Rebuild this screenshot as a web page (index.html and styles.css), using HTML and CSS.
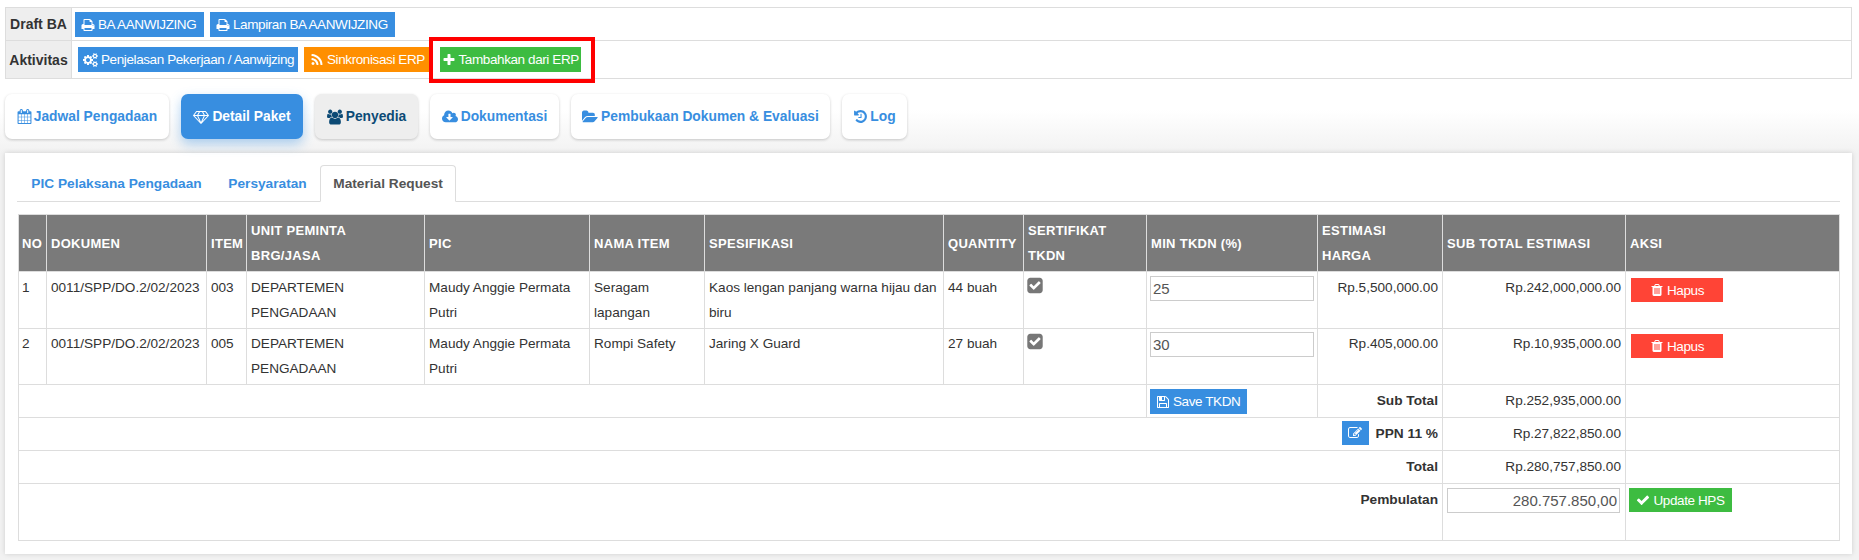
FILE: index.html
```html
<!DOCTYPE html>
<html lang="id">
<head>
<meta charset="utf-8">
<title>Material Request</title>
<link rel="stylesheet" href="styles.css">
</head>
<body>
<svg class="sprite" xmlns="http://www.w3.org/2000/svg">
<symbol id="i-print" viewBox="0 0 1792 1792"><path d="M448 1536h896v-256h-896v256zm0-640h896v-384h-160q-40 0-68-28t-28-68v-160h-640v640zm1152 64q0-26-19-45t-45-19-45 19-19 45 19 45 45 19 45-19 19-45zm128 0v416q0 13-9.5 22.5t-22.5 9.5h-224v160q0 40-28 68t-68 28h-960q-40 0-68-28t-28-68v-160h-224q-13 0-22.5-9.5t-9.5-22.5v-416q0-79 56.5-135.5t135.5-56.5h64v-544q0-40 28-68t68-28h672q40 0 88 20t76 48l152 152q28 28 48 76t20 88v256h64q79 0 135.5 56.5t56.5 135.5z"/></symbol>
<symbol id="i-cogs" viewBox="0 0 1920 1792"><path d="M896 896q0-106-75-181t-181-75-181 75-75 181 75 181 181 75 181-75 75-181zm768 512q0-52-38-90t-90-38-90 38-38 90q0 53 37.5 90.5t90.5 37.5 90.5-37.5 37.5-90.5zm0-1024q0-52-38-90t-90-38-90 38-38 90q0 53 37.5 90.5t90.5 37.5 90.5-37.5 37.5-90.5zm-384 421v185q0 10-7 19.5t-16 10.5l-155 24q-11 35-32 76 34 48 90 115 7 11 7 20 0 12-7 19-23 30-82.5 89.5t-78.5 59.5q-11 0-21-7l-115-90q-37 19-77 31-11 108-23 155-7 24-30 24h-186q-11 0-20-7.5t-10-17.5l-23-153q-34-10-75-31l-118 89q-7 7-20 7-11 0-21-8-144-133-144-160 0-9 7-19 10-14 41-53t47-61q-23-44-35-82l-152-24q-10-1-17-9.5t-7-19.5v-185q0-10 7-19.5t16-10.5l155-24q11-35 32-76-34-48-90-115-7-11-7-20 0-12 7-20 22-30 82-89t79-59q11 0 21 7l115 90q34-18 77-32 11-108 23-154 7-24 30-24h186q11 0 20 7.5t10 17.5l23 153q34 10 75 31l118-89q8-7 20-7 11 0 21 8 144 133 144 160 0 8-7 19-12 16-42 54t-45 60q23 48 34 82l152 23q10 2 17 10.5t7 19.5zm640 533v140q0 16-149 31-12 27-30 52 51 113 51 138 0 4-4 7-122 71-124 71-8 0-46-47t-52-68q-20 2-30 2t-30-2q-14 21-52 68t-46 47q-2 0-124-71-4-3-4-7 0-25 51-138-18-25-30-52-149-15-149-31v-140q0-16 149-31 13-29 30-52-51-113-51-138 0-4 4-7 4-2 35-20t59-34 30-16q8 0 46 46.5t52 67.5q20-2 30-2t30 2q51-71 92-112l6-2q4 0 124 70 4 3 4 7 0 25-51 138 17 23 30 52 149 15 149 31zm0-1024v140q0 16-149 31-12 27-30 52 51 113 51 138 0 4-4 7-122 71-124 71-8 0-46-47t-52-68q-20 2-30 2t-30-2q-14 21-52 68t-46 47q-2 0-124-71-4-3-4-7 0-25 51-138-18-25-30-52-149-15-149-31v-140q0-16 149-31 13-29 30-52-51-113-51-138 0-4 4-7 4-2 35-20t59-34 30-16q8 0 46 46.5t52 67.5q20-2 30-2t30 2q51-71 92-112l6-2q4 0 124 70 4 3 4 7 0 25-51 138 17 23 30 52 149 15 149 31z"/></symbol>
<symbol id="i-rss" viewBox="0 0 1792 1792"><path d="M576 1344q0 80-56 136t-136 56-136-56-56-136 56-136 136-56 136 56 56 136zm512 123q2 28-17 48-18 21-47 21h-135q-25 0-43-16.5t-20-41.5q-22-229-184.5-391.5t-391.5-184.5q-25-2-41.5-20t-16.5-43v-135q0-29 21-47 17-17 43-17h5q160 13 306 80.5t259 181.5q114 113 181.5 259t80.5 306zm512 2q2 27-18 47-18 20-46 20h-143q-26 0-44.5-17.5t-19.5-42.5q-12-215-101-408.5t-231.5-336-336-231.5-408.5-102q-25-1-42.5-19.5t-17.5-43.5v-143q0-28 20-46 18-18 44-18h3q262 13 501.5 120t425.5 294q187 186 294 425.5t120 501.5z"/></symbol>
<symbol id="i-plus" viewBox="0 0 1792 1792"><path d="M1600 736v192q0 40-28 68t-68 28h-416v416q0 40-28 68t-68 28h-192q-40 0-68-28t-28-68v-416h-416q-40 0-68-28t-28-68v-192q0-40 28-68t68-28h416v-416q0-40 28-68t68-28h192q40 0 68 28t28 68v416h416q40 0 68 28t28 68z"/></symbol>
<symbol id="i-check" viewBox="0 0 1792 1792"><path d="M1671 566q0 40-28 68l-724 724-136 136q-28 28-68 28t-68-28l-136-136-362-362q-28-28-28-68t28-68l136-136q28-28 68-28t68 28l294 295 656-657q28-28 68-28t68 28l136 136q28 28 28 68z"/></symbol>
<symbol id="i-trash" viewBox="0 0 1792 1792"><path d="M704 1376v-704q0-14-9-23t-23-9h-64q-14 0-23 9t-9 23v704q0 14 9 23t23 9h64q14 0 23-9t9-23zm256 0v-704q0-14-9-23t-23-9h-64q-14 0-23 9t-9 23v704q0 14 9 23t23 9h64q14 0 23-9t9-23zm256 0v-704q0-14-9-23t-23-9h-64q-14 0-23 9t-9 23v704q0 14 9 23t23 9h64q14 0 23-9t9-23zm-544-992h448l-48-117q-7-9-17-11h-317q-10 2-17 11zm928 32v64q0 14-9 23t-23 9h-96v948q0 83-47 143.5t-113 60.5h-832q-66 0-113-58.5t-47-141.5v-952h-96q-14 0-23-9t-9-23v-64q0-14 9-23t23-9h309l70-167q15-37 54-63t79-26h320q40 0 79 26t54 63l70 167h309q14 0 23 9t9 23z"/></symbol>
<symbol id="i-checksq" viewBox="0 0 1792 1792"><path d="M813 1299l614-614q19-19 19-45t-19-45l-102-102q-19-19-45-19t-45 19l-467 467-211-211q-19-19-45-19t-45 19l-102 102q-19 19-19 45t19 45l358 358q19 19 45 19t45-19zm851-883v960q0 119-84.5 203.5t-203.5 84.5h-960q-119 0-203.5-84.5t-84.5-203.5v-960q0-119 84.5-203.5t203.5-84.5h960q119 0 203.5 84.5t84.5 203.5z"/></symbol>
<symbol id="i-calendar" viewBox="0 0 1664 1792"><path d="M128 1664h288v-288h-288v288zm352 0h320v-288h-320v288zm-352-352h288v-320h-288v320zm352 0h320v-320h-320v320zm-352-384h288v-288h-288v288zm736 736h320v-288h-320v288zm-384-736h320v-288h-320v288zm768 736h288v-288h-288v288zm-384-352h320v-320h-320v320zm-352-864v-288q0-13-9.5-22.5t-22.5-9.5h-64q-13 0-22.5 9.5t-9.5 22.5v288q0 13 9.5 22.5t22.5 9.5h64q13 0 22.5-9.5t9.5-22.5zm736 864h288v-320h-288v320zm-384-384h320v-288h-320v288zm384 0h288v-288h-288v288zm32-480v-288q0-13-9.5-22.5t-22.5-9.5h-64q-13 0-22.5 9.5t-9.5 22.5v288q0 13 9.5 22.5t22.5 9.5h64q13 0 22.5-9.5t9.5-22.5zm384-64v1280q0 52-38 90t-90 38h-1408q-52 0-90-38t-38-90v-1280q0-52 38-90t90-38h128v-96q0-66 47-113t113-47h64q66 0 113 47t47 113v96h384v-96q0-66 47-113t113-47h64q66 0 113 47t47 113v96h128q52 0 90 38t38 90z"/></symbol>
<symbol id="i-diamond" viewBox="0 0 2048 1792"><path d="M212 768l623 665-300-665h-323zm812 772l349-772h-698zm-486-900l204-384h-262l-288 384h346zm675 793l623-665h-323zm-530-793h682l-204-384h-274zm827 0h346l-288-384h-262zm141-486l384 512q14 18 13 41.5t-17 40.5l-960 1024q-18 20-47 20t-47-20l-960-1024q-16-17-17-40.5t13-41.5l384-512q18-26 51-26h1152q33 0 51 26z"/></symbol>
<symbol id="i-users" viewBox="0 0 1920 1792"><path d="M593 896q-162 5-265 128h-134q-82 0-138-40.5t-56-118.5q0-353 124-353 6 0 43.5 21t97.5 42.5 119 21.5q67 0 133-23-5 37-5 66 0 139 81 256zm1071 637q0 120-73 189.5t-194 69.5h-874q-121 0-194-69.5t-73-189.5q0-53 3.5-103.5t14-109 26.5-108.5 43-97.5 62-81 85.5-53.5 111.5-20q10 0 43 21.5t73 48 107 48 135 21.5 135-21.5 107-48 73-48 43-21.5q61 0 111.5 20t85.5 53.5 62 81 43 97.5 26.5 108.5 14 109 3.5 103.5zm-1024-1277q0 106-75 181t-181 75-181-75-75-181 75-181 181-75 181 75 75 181zm704 384q0 159-112.5 271.5t-271.5 112.5-271.5-112.5-112.5-271.5 112.5-271.5 271.5-112.5 271.5 112.5 112.5 271.5zm576 225q0 78-56 118.5t-138 40.5h-134q-103-123-265-128 81-117 81-256 0-29-5-66 66 23 133 23 59 0 119-21.5t97.5-42.5 43.5-21q124 0 124 353zm-128-609q0 106-75 181t-181 75-181-75-75-181 75-181 181-75 181 75 75 181z"/></symbol>
<symbol id="i-cloud" viewBox="0 0 1920 1792"><path d="M1280 928q0-14-9-23t-23-9h-224v-352q0-13-9.5-22.5t-22.5-9.5h-192q-13 0-22.5 9.5t-9.5 22.5v352h-224q-13 0-22.5 9.5t-9.5 22.5q0 14 9 23l352 352q9 9 23 9t23-9l351-351q10-12 10-24zm640 224q0 159-112.5 271.5t-271.5 112.5h-1088q-185 0-316.5-131.5t-131.5-316.5q0-130 70-240t188-165q-2-30-2-43 0-212 150-362t362-150q156 0 285.5 87t188.5 231q71-62 166-62 106 0 181 75t75 181q0 76-41 138 130 31 213.5 135.5t83.5 238.5z"/></symbol>
<symbol id="i-folder" viewBox="0 0 1920 1792"><path d="M1879 952q0 31-31 66l-336 396q-43 51-120.5 86.5t-143.5 35.5h-1088q-34 0-60.5-13t-26.5-43q0-31 31-66l336-396q43-51 120.5-86.5t143.5-35.5h1088q34 0 60.5 13t26.5 43zm-343-344v160h-832q-94 0-197 47.5t-164 119.5l-337 396-5 6q0-4-.5-12.5t-.5-12.5v-960q0-92 66-158t158-66h320q92 0 158 66t66 158v32h544q92 0 158 66t66 158z"/></symbol>
<symbol id="i-history" viewBox="0 0 1792 1792"><path d="M1664 896q0 156-61 298t-164 245-245 164-298 61q-172 0-327-72.5t-264-204.5q-7-10-6.5-22.5t8.5-20.5l137-138q10-9 25-9 16 2 23 12 73 95 179 147t225 52q104 0 198.5-40.5t163.5-109.5 109.5-163.5 40.5-198.5-40.5-198.5-109.5-163.5-163.5-109.5-198.5-40.5q-98 0-188 35.5t-160 101.5l137 138q31 30 14 69-17 40-59 40h-448q-26 0-45-19t-19-45v-448q0-42 40-59 39-17 69 14l130 129q107-101 244.5-156.5t284.5-55.5q156 0 298 61t245 164 164 245 61 298zm-640-288v448q0 14-9 23t-23 9h-320q-14 0-23-9t-9-23v-64q0-14 9-23t23-9h224v-352q0-14 9-23t23-9h64q14 0 23 9t9 23z"/></symbol>
<symbol id="i-floppy" viewBox="0 0 1792 1792"><path d="M512 1536h768v-384h-768v384zm896 0h128v-896q0-14-10-38.5t-20-34.5l-281-281q-10-10-34-20t-39-10v416q0 40-28 68t-68 28h-576q-40 0-68-28t-28-68v-416h-128v1280h128v-416q0-40 28-68t68-28h832q40 0 68 28t28 68v416zm-384-928v-320q0-13-9.5-22.5t-22.5-9.5h-192q-13 0-22.5 9.5t-9.5 22.5v320q0 13 9.5 22.5t22.5 9.5h192q13 0 22.5-9.5t9.5-22.5zm640 32v928q0 40-28 68t-68 28h-1344q-40 0-68-28t-28-68v-1344q0-40 28-68t68-28h928q40 0 88 20t76 48l280 280q28 28 48 76t20 88z"/></symbol>
<symbol id="i-edit" viewBox="0 0 1792 1792"><path d="M888 1184l116-116-152-152-116 116v56h96v96h56zm440-720q-16-16-33 1l-350 350q-17 17-1 33t33-1l350-350q17-17 1-33zm80 594v190q0 119-84.5 203.5t-203.5 84.5h-832q-119 0-203.5-84.5t-84.5-203.5v-832q0-119 84.5-203.5t203.5-84.5h832q63 0 117 25 15 7 18 23 3 17-9 29l-49 49q-14 14-32 8-23-6-45-6h-832q-66 0-113 47t-47 113v832q0 66 47 113t113 47h832q66 0 113-47t47-113v-126q0-13 9-22l64-64q15-15 35-7t20 29zm-96-738l288 288-672 672h-288v-288zm444 132l-92 92-288-288 92-92q28-28 68-28t68 28l152 152q28 28 28 68t-28 68z"/></symbol>
</svg>

<section class="actions">
  <table class="actions-table">
    <tr>
      <th class="actions-label">Draft BA</th>
      <td class="actions-cell actions-cell-a">
        <a class="btn btn-blue btn-ba"><svg class="ic"><use href="#i-print"/></svg>BA AANWIJZING</a>
        <a class="btn btn-blue btn-lamp"><svg class="ic"><use href="#i-print"/></svg>Lampiran BA AANWIJZING</a>
      </td>
    </tr>
    <tr>
      <th class="actions-label">Aktivitas</th>
      <td class="actions-cell actions-cell-b">
        <a class="btn btn-blue btn-pen"><svg class="ic ic-cogs"><use href="#i-cogs"/></svg>Penjelasan Pekerjaan / Aanwijzing</a>
        <a class="btn btn-orange btn-sink"><svg class="ic"><use href="#i-rss"/></svg>Sinkronisasi ERP</a>
        <a class="btn btn-green btn-add"><svg class="ic"><use href="#i-plus"/></svg>Tambahkan dari ERP</a>
      </td>
    </tr>
  </table>
  <div class="highlight"></div>
</section>

<nav class="pills">
  <a class="pill pill-jadwal"><svg class="ic"><use href="#i-calendar"/></svg>Jadwal Pengadaan</a>
  <a class="pill pill-active pill-detail"><svg class="ic ic-wide"><use href="#i-diamond"/></svg>Detail Paket</a>
  <a class="pill pill-gray pill-peny"><svg class="ic ic-wide"><use href="#i-users"/></svg>Penyedia</a>
  <a class="pill pill-dok"><svg class="ic ic-wide"><use href="#i-cloud"/></svg>Dokumentasi</a>
  <a class="pill pill-buka"><svg class="ic ic-wide"><use href="#i-folder"/></svg>Pembukaan Dokumen &amp; Evaluasi</a>
  <a class="pill pill-log"><svg class="ic"><use href="#i-history"/></svg>Log</a>
</nav>

<main class="panel">
  <div class="tabs">
    <a class="tab">PIC Pelaksana Pengadaan</a>
    <a class="tab">Persyaratan</a>
    <a class="tab tab-active">Material Request</a>
  </div>
  <table class="grid">
    <colgroup>
      <col class="c1"><col class="c2"><col class="c3"><col class="c4"><col class="c5"><col class="c6"><col class="c7"><col class="c8"><col class="c9"><col class="c10"><col class="c11"><col class="c12"><col class="c13">
    </colgroup>
    <thead>
      <tr>
        <th>NO</th><th>DOKUMEN</th><th>ITEM</th><th>UNIT PEMINTA<br>BRG/JASA</th><th>PIC</th><th>NAMA ITEM</th><th>SPESIFIKASI</th><th>QUANTITY</th><th>SERTIFIKAT TKDN</th><th>MIN TKDN (%)</th><th>ESTIMASI HARGA</th><th>SUB TOTAL ESTIMASI</th><th>AKSI</th>
      </tr>
    </thead>
    <tbody>
      <tr class="item">
        <td>1</td><td>0011/SPP/DO.2/02/2023</td><td>003</td><td>DEPARTEMEN PENGADAAN</td><td>Maudy Anggie Permata Putri</td><td>Seragam lapangan</td><td>Kaos lengan panjang warna hijau dan biru</td><td>44 buah</td>
        <td><svg class="check"><use href="#i-checksq"/></svg></td>
        <td class="cell-input"><input class="field" type="text" value="25"></td>
        <td class="num">Rp.5,500,000.00</td><td class="num">Rp.242,000,000.00</td>
        <td class="cell-action"><a class="btn btn-red"><svg class="ic"><use href="#i-trash"/></svg>Hapus</a></td>
      </tr>
      <tr class="item item-tight">
        <td>2</td><td>0011/SPP/DO.2/02/2023</td><td>005</td><td>DEPARTEMEN PENGADAAN</td><td>Maudy Anggie Permata Putri</td><td>Rompi Safety</td><td>Jaring X Guard</td><td>27 buah</td>
        <td><svg class="check"><use href="#i-checksq"/></svg></td>
        <td class="cell-input"><input class="field" type="text" value="30"></td>
        <td class="num">Rp.405,000.00</td><td class="num">Rp.10,935,000.00</td>
        <td class="cell-action"><a class="btn btn-red"><svg class="ic"><use href="#i-trash"/></svg>Hapus</a></td>
      </tr>
      <tr class="sum">
        <td colspan="9"></td>
        <td class="cell-save"><a class="btn btn-blue btn-save"><svg class="ic"><use href="#i-floppy"/></svg>Save TKDN</a></td>
        <td class="num strong">Sub Total</td><td class="num">Rp.252,935,000.00</td><td></td>
      </tr>
      <tr class="sum">
        <td colspan="11" class="num strong"><a class="btn btn-blue btn-edit"><svg class="ic ic-only"><use href="#i-edit"/></svg></a>PPN 11 %</td>
        <td class="num">Rp.27,822,850.00</td><td></td>
      </tr>
      <tr class="sum">
        <td colspan="11" class="num strong">Total</td>
        <td class="num">Rp.280,757,850.00</td><td></td>
      </tr>
      <tr class="round">
        <td colspan="11" class="num strong">Pembulatan</td>
        <td class="cell-round"><input class="field field-right" type="text" value="280.757.850,00"></td>
        <td class="cell-update"><a class="btn btn-green btn-update"><svg class="ic"><use href="#i-check"/></svg>Update HPS</a></td>
      </tr>
    </tbody>
  </table>
</main>
</body>
</html>
```
FILE: styles.css
```css
* { box-sizing: border-box; }
html, body { height: 100%; }
body {
  margin: 0;
  padding: 7px 7px 0 5px;
  overflow: hidden;
  background: linear-gradient(#fff 0, #fff 110px, #f2f2f2 153px);
  font-family: "Liberation Sans", Arial, sans-serif;
  font-size: 14px;
  color: #333;
}
.sprite { position: absolute; width: 0; height: 0; }
a { text-decoration: none; }

.ic { width: 14px; height: 14px; fill: currentColor; margin-right: 3px; flex: none; }
.ic-wide { width: 16px; height: 16px; }
.ic-cogs { width: 15px; }
.ic-only { margin: 0; }
.pill .ic:not(.ic-wide) { width: 15px; height: 15px; margin-right: 2px; }

.actions { position: relative; }
.actions-table { width: 1847px; border-collapse: collapse; background: #fff; }
.actions-table th, .actions-table td { border: 1px solid #ddd; padding: 0; }
.actions-label { width: 66px; background: #eee; font-size: 14px; text-align: center; color: #333; }
.actions-cell { font-size: 0; vertical-align: top; }
.actions-table .actions-cell-a { height: 33px; padding: 4px 3px 3px; }
.actions-table .actions-cell-b { height: 38px; padding: 6px 6px; }
.highlight { position: absolute; left: 424px; top: 30px; width: 166px; height: 46px; border: 4px solid #f00; }

.btn { display: inline-flex; align-items: center; vertical-align: top; height: 25px; padding: 0 6px; color: #fff; font-size: 13.5px; letter-spacing: -.4px; white-space: nowrap; }
.btn-blue { background: #388ee0; }
.btn-orange { background: #ff8f00; }
.btn-green { background: #3dbc41; }
.btn-red { background: #ff4436; }
.btn-ba { width: 129px; margin-right: 6px; }
.btn-lamp { width: 185px; }
.btn-pen { width: 220px; margin-right: 6px; padding-left: 5px; }
.btn-sink { width: 125px; margin-right: 11px; }
.btn-add { width: 141px; padding-left: 2px; }
.btn-add .ic { margin-right: 2.5px; }

.pills { display: flex; gap: 12px; margin-top: 15px; }
.pill { display: flex; align-items: center; justify-content: center; height: 45px; border-radius: 7px; background: #fff; color: #388ee0; font-size: 13.8px; font-weight: 700; white-space: nowrap; box-shadow: 0 1px 3px rgba(0,0,0,.2); }
.pill-jadwal { width: 164px; }
.pill-detail { width: 122px; }
.pill-peny { width: 103px; }
.pill-dok { width: 129px; }
.pill-buka { width: 259px; }
.pill-log { width: 65px; }
.pill-active { background: #388ee0; color: #fff; box-shadow: 0 5px 12px rgba(56,142,224,.4); }
.pill-gray { background: #eee; color: #0c4a75; }

.panel { margin-top: 14px; height: 401px; width: 1847px; padding: 12px 12px 0; background: #fff; box-shadow: 0 0 5px rgba(0,0,0,.15); }
.tabs { display: flex; height: 37px; border-bottom: 1px solid #ddd; padding-left: 1px; }
.tab { display: flex; align-items: center; height: 37px; padding: 0 12.3px; font-size: 13.7px; font-weight: 700; color: #388ee0; border: 1px solid transparent; border-radius: 4px 4px 0 0; white-space: nowrap; }
.tab-active { color: #555; background: #fff; border-color: #ddd; border-bottom-color: #fff; }

.grid { margin: 12px 0 0 1px; width: 1822px; table-layout: fixed; border-collapse: collapse; line-height: 25px; font-size: 13.6px; }
.c1 { width: 28px; } .c2 { width: 160px; } .c3 { width: 40px; } .c4 { width: 178px; } .c5 { width: 165px; } .c6 { width: 115px; } .c7 { width: 239px; } .c8 { width: 80px; } .c9 { width: 123px; } .c10 { width: 171px; } .c11 { width: 125px; } .c12 { width: 183px; } .c13 { width: 214px; }
.grid th, .grid td { border: 1px solid #ddd; padding: 3px 4px; vertical-align: top; }
.grid th { background: #7a7a7a; color: #fff; font-size: 13px; font-weight: 700; text-align: left; vertical-align: middle; letter-spacing: .3px; height: 57px; }
.grid th:first-child, .item td:first-child { padding-left: 3px; }
.item td { height: 57px; padding-right: 3px; }
.grid .item-tight td { height: 56px; padding-top: 2px; }
.sum td { height: 33px; }
.round td { height: 57px; }
.grid .num { text-align: right; padding-right: 4px; }
.strong { font-size: 13.7px; font-weight: 700; }
.check { width: 18px; height: 19px; fill: #777; vertical-align: -3px; margin-left: -2px; }
.grid .cell-input { padding-top: 4px; padding-left: 3px; }
.grid .item-tight .cell-input { padding-top: 3px; }
.field { display: block; width: 164px; height: 25px; padding: 0 2px; border: 1px solid #ccc; background: #fff; font: 15px "Liberation Sans", Arial, sans-serif; color: #555; }
.field-right { width: 173px; text-align: right; }
.grid .cell-round { padding-top: 4px; }
.grid .cell-action { padding-left: 5px; padding-top: 6px; }
.grid .item-tight .cell-action { padding-top: 5px; }
.btn-red { width: 92px; justify-content: center; height: 24px; }
.grid .cell-save { padding-top: 4px; padding-left: 3px; }
.btn-save { width: 97px; height: 25px; }
.btn-edit { width: 27px; height: 24px; justify-content: center; margin-right: 7px; }
.grid .cell-update { padding-left: 3px; padding-top: 4px; }
.btn-update { width: 103px; height: 24px; justify-content: center; }
```
